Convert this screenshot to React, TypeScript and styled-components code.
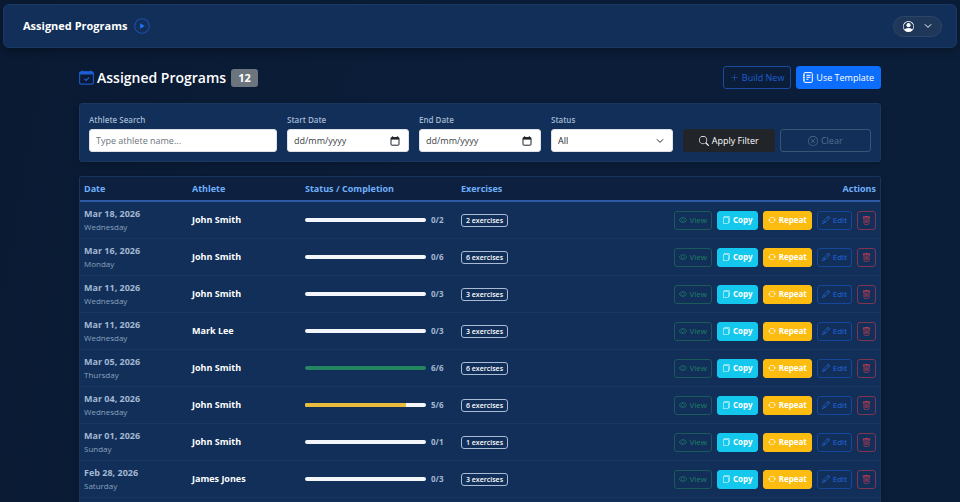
import React from "react";
import styled, { createGlobalStyle, css } from "styled-components";
import {
  BsArrowRepeat,
  BsEye,
  BsFiles,
  BsPencil,
  BsPersonCircle,
  BsPlusLg,
  BsSearch,
  BsTrash,
  BsXCircle,
} from "react-icons/bs";

const GlobalStyle = createGlobalStyle`
  *, *::before, *::after { box-sizing: border-box; }
  html { background: #0b1c36; }
  body {
    margin: 0;
    background: linear-gradient(100deg, #0a1a33 0%, #0b1d39 50%, #0b1e39 100%);
    color: #ffffff;
    font-family: "Open Sans", "Noto Sans", sans-serif;
    font-size: 9px;
    line-height: 1.5;
  }
  button, input, select { font: inherit; margin: 0; }
  svg { display: block; flex: none; }
`;

const Page = styled.div`
  display: flex;
  flex-direction: column;
  min-height: 100vh;
  padding-top: 4px;
`;

const TopBar = styled.header`
  display: flex;
  align-items: center;
  justify-content: space-between;
  margin: 0 3px;
  height: 44px;
  padding: 0 14px 0 19px;
  border: 1px solid #183a63;
  border-radius: 6px;
  background: #112f58;
  box-shadow: 0 3px 10px rgba(0, 0, 0, 0.3);
`;

const Brand = styled.div`
  display: flex;
  align-items: center;
  gap: 7px;
  font-size: 11px;
  font-weight: 700;
`;

const UserButton = styled.button`
  display: flex;
  align-items: center;
  justify-content: space-between;
  width: 49px;
  height: 21px;
  padding: 0 9px;
  border: 1px solid #2c4569;
  border-radius: 11px;
  background: #1f3759;
  color: #ffffff;
`;

const Main = styled.main`
  display: flex;
  flex: 1;
  flex-direction: column;
  padding: 18px 79px 0;
`;

const TitleRow = styled.div`
  display: flex;
  align-items: center;
  justify-content: space-between;
`;

const Title = styled.h1`
  display: flex;
  align-items: center;
  gap: 3px;
  margin: 0;
  font-size: 14px;
  font-weight: 600;
  line-height: 20px;
`;

const Count = styled.span`
  margin-left: 2px;
  padding: 0 7px;
  border-radius: 3px;
  background: #6c757d;
  font-size: 11px;
  font-weight: 700;
  line-height: 18px;
`;

const ButtonGroup = styled.div`
  display: flex;
  gap: 5px;
`;

const tones = {
  primary: css`background: #0d6efd; border-color: #0d6efd; color: #ffffff;`,
  primaryOutline: css`border-color: #1a4b9f; color: #1e5fd2;`,
  dark: css`background: #212529; border-color: #212529; color: #ffffff;`,
  muted: css`border-color: #3a5475; color: #566e8e;`,
  view: css`border-color: #1b5a58; color: #208066;`,
  copy: css`background: #14c8ed; border-color: #14c8ed; color: #ffffff; font-weight: 700;`,
  repeat: css`background: #fdbd10; border-color: #fdbd10; color: #ffffff; font-weight: 700;`,
  edit: css`border-color: #17479a; color: #2268e0;`,
  remove: css`border-color: #7f3550; color: #e03c52;`,
};

type Tone = keyof typeof tones;

const Button = styled.button<{ $tone: Tone }>`
  display: inline-flex;
  align-items: center;
  justify-content: center;
  gap: 3px;
  height: 23px;
  padding: 0 6px;
  border: 1px solid transparent;
  border-radius: 3px;
  background: transparent;
  font-size: 9px;
  font-weight: 500;
  white-space: nowrap;
  ${({ $tone }) => tones[$tone]}
`;

const RowButton = styled(Button)`
  height: 19px;
  padding: 0 4px;
  font-size: 8px;
`;

const FilterCard = styled.form`
  display: grid;
  grid-template-columns: 188fr 122fr 122fr 122fr 188fr;
  align-items: end;
  gap: 10px;
  margin-top: 14px;
  padding: 9px;
  border: 1px solid #19375f;
  border-radius: 3px;
  background: #112f58;
  box-shadow: 0 2px 6px rgba(0, 0, 0, 0.2);
`;

const Field = styled.div`
  display: flex;
  flex-direction: column;
  gap: 2px;
  min-width: 0;
`;

const Label = styled.label`
  color: #a3b7d3;
  font-size: 8px;
  font-weight: 600;
  line-height: 14px;
`;

const Control = styled.div`
  display: flex;
  align-items: center;
  height: 23px;
  padding-right: 8px;
  border: 1px solid #dee2e6;
  border-radius: 3px;
  background: #ffffff;
  color: #212529;
`;

const Input = styled.input`
  flex: 1;
  min-width: 0;
  height: 100%;
  padding: 0 6px;
  border: 0;
  outline: 0;
  background: transparent;
  color: #212529;
  font-size: 9px;
  &::placeholder { color: #6c757d; opacity: 1; }
`;

const DateInput = styled(Input)`
  &::placeholder { color: #3d4247; }
`;

const Select = styled.select`
  flex: 1;
  min-width: 0;
  height: 100%;
  padding: 0 6px;
  border: 0;
  outline: 0;
  appearance: none;
  background: transparent;
  color: #212529;
  font-size: 9px;
`;

const PickerButton = styled.button`
  padding: 0;
  border: 0;
  background: transparent;
  color: #212529;
`;

const FilterActions = styled.div`
  display: grid;
  grid-template-columns: 1fr 1fr;
  gap: 5px;
`;

const TableCard = styled.section`
  flex: 1;
  margin-top: 14px;
  border: 1px solid #19345a;
  border-bottom: 0;
  border-radius: 3px 3px 0 0;
  background: #112f58;
  box-shadow: 0 2px 6px rgba(0, 0, 0, 0.2);
`;

const Table = styled.table`
  width: 100%;
  table-layout: fixed;
  border-collapse: separate;
  border-spacing: 0;
`;

const HeadCell = styled.th<{ $width?: number; $right?: boolean }>`
  width: ${({ $width }) => ($width ? `${$width}px` : "auto")};
  height: 25px;
  padding: 0 4px;
  border-bottom: 2px solid #2c58a4;
  background: #0d2040;
  color: #6fb0fb;
  font-size: 9px;
  font-weight: 700;
  text-align: ${({ $right }) => ($right ? "right" : "left")};
`;

const Cell = styled.td`
  height: 37px;
  padding: 0 4px;
  border-bottom: 1px solid #18375f;
  vertical-align: middle;
`;

const DateText = styled.div`
  color: #a3b7d3;
  font-size: 9px;
  font-weight: 700;
  line-height: 14px;
`;

const DayText = styled.div`
  color: #8ba0bf;
  font-size: 8px;
  line-height: 12px;
`;

const Athlete = styled.span`
  font-size: 9px;
  font-weight: 700;
`;

const Progress = styled.div`
  display: flex;
  align-items: center;
  gap: 5px;
  color: #a3b7d3;
  font-size: 8px;
  font-weight: 700;
`;

const Track = styled.div`
  width: 121px;
  height: 4px;
  overflow: hidden;
  border-radius: 2px;
  background: #f3f6fa;
`;

const Fill = styled.div<{ $full: boolean }>`
  height: 100%;
  background: ${({ $full }) => ($full ? "#238561" : "#e9bc3c")};
`;

const Badge = styled.span`
  display: inline-block;
  padding: 0 4px;
  border: 1px solid #a9bbd3;
  border-radius: 3px;
  font-size: 7px;
  font-weight: 600;
  line-height: 11px;
  vertical-align: middle;
`;

const RowActions = styled.div`
  display: flex;
  justify-content: flex-end;
  gap: 5px;
`;

const PlayIcon = () => (
  <svg width="16" height="16" viewBox="0 0 16 16" aria-hidden="true">
    <circle cx="8" cy="8" r="7.3" fill="none" stroke="#1b4fa8" strokeWidth="1.1" />
    <path d="M6.2 5.3v5.4L10.6 8z" fill="#1d74f5" />
  </svg>
);

const CalendarCheckIcon = () => (
  <svg width="15" height="15" viewBox="0 0 15 15" aria-hidden="true">
    <rect x="0.6" y="1.8" width="13.8" height="12.4" rx="1.6" fill="none" stroke="#1c55c4" strokeWidth="1.2" />
    <path d="M0.6 4.6V3a1.6 1.6 0 0 1 1.6-1.6h10.6A1.6 1.6 0 0 1 14.4 3v1.6z" fill="#1c5fd8" />
    <path d="M3.3 0.4v2M11.7 0.4v2" stroke="#1c5fd8" strokeWidth="1.2" />
    <path d="M5.3 8.8l1.8 1.7 3-3.2" fill="none" stroke="#2263d6" strokeWidth="1.1" />
  </svg>
);

const TemplateIcon = () => (
  <svg width="10" height="11" viewBox="0 0 10 11" fill="none" stroke="currentColor" aria-hidden="true">
    <rect x="1" y="0.6" width="8.3" height="9.8" rx="1" />
    <path d="M0 3h1.6M0 5.5h1.6M0 8h1.6M3.4 3.3h4M3.4 5.3h4M3.4 7.3h2" />
  </svg>
);

const DatePickerIcon = () => (
  <svg width="10" height="10" viewBox="0 0 10 10" aria-hidden="true">
    <rect x="1" y="1.6" width="8" height="7.6" rx="0.6" fill="none" stroke="currentColor" strokeWidth="1" />
    <path d="M1 1.4h8v2.2H1z" fill="currentColor" />
    <path d="M2.7 0.2v2M7.3 0.2v2" stroke="currentColor" strokeWidth="1" />
  </svg>
);

const ArrowDown = () => (
  <svg width="8" height="8" viewBox="0 0 8 8" aria-hidden="true">
    <path d="M1.2 2.6L4 5.4l2.8-2.8" fill="none" stroke="currentColor" strokeWidth="1" strokeLinecap="round" strokeLinejoin="round" />
  </svg>
);

interface Program {
  date: string;
  day: string;
  athlete: string;
  done: number;
  total: number;
  exercises: number;
}

const programs: Program[] = [
  { date: "Mar 18, 2026", day: "Wednesday", athlete: "John Smith", done: 0, total: 2, exercises: 2 },
  { date: "Mar 16, 2026", day: "Monday", athlete: "John Smith", done: 0, total: 6, exercises: 6 },
  { date: "Mar 11, 2026", day: "Wednesday", athlete: "John Smith", done: 0, total: 3, exercises: 3 },
  { date: "Mar 11, 2026", day: "Wednesday", athlete: "Mark Lee", done: 0, total: 3, exercises: 3 },
  { date: "Mar 05, 2026", day: "Thursday", athlete: "John Smith", done: 6, total: 6, exercises: 6 },
  { date: "Mar 04, 2026", day: "Wednesday", athlete: "John Smith", done: 5, total: 6, exercises: 6 },
  { date: "Mar 01, 2026", day: "Sunday", athlete: "John Smith", done: 0, total: 1, exercises: 1 },
  { date: "Feb 28, 2026", day: "Saturday", athlete: "James Jones", done: 0, total: 3, exercises: 3 },
];

function DateField({ id, label }: { id: string; label: string }) {
  return (
    <Field>
      <Label htmlFor={id}>{label}</Label>
      <Control>
        <DateInput id={id} type="text" placeholder="dd/mm/yyyy" />
        <PickerButton type="button" aria-label={`Pick ${label.toLowerCase()}`}>
          <DatePickerIcon />
        </PickerButton>
      </Control>
    </Field>
  );
}

function ProgramRow({ program }: { program: Program }) {
  const { date, day, athlete, done, total, exercises } = program;
  return (
    <tr>
      <Cell>
        <DateText>{date}</DateText>
        <DayText>{day}</DayText>
      </Cell>
      <Cell>
        <Athlete>{athlete}</Athlete>
      </Cell>
      <Cell>
        <Progress>
          <Track>
            <Fill $full={done === total} style={{ width: `${(done / total) * 100}%` }} />
          </Track>
          <span>{done}/{total}</span>
        </Progress>
      </Cell>
      <Cell>
        <Badge>{exercises} exercises</Badge>
      </Cell>
      <Cell>
        <RowActions>
          <RowButton type="button" $tone="view"><BsEye size={8} />View</RowButton>
          <RowButton type="button" $tone="copy"><BsFiles size={8} />Copy</RowButton>
          <RowButton type="button" $tone="repeat"><BsArrowRepeat size={8} />Repeat</RowButton>
          <RowButton type="button" $tone="edit"><BsPencil size={8} />Edit</RowButton>
          <RowButton type="button" $tone="remove" aria-label="Delete"><BsTrash size={9} /></RowButton>
        </RowActions>
      </Cell>
    </tr>
  );
}

export default function App() {
  return (
    <>
      <GlobalStyle />
      <Page>
        <TopBar>
          <Brand>
            Assigned Programs
            <PlayIcon />
          </Brand>
          <UserButton type="button" aria-label="Account menu">
            <BsPersonCircle size={11} />
            <ArrowDown />
          </UserButton>
        </TopBar>
        <Main>
          <TitleRow>
            <Title>
              <CalendarCheckIcon />
              Assigned Programs
              <Count>12</Count>
            </Title>
            <ButtonGroup>
              <Button type="button" $tone="primaryOutline"><BsPlusLg size={9} />Build New</Button>
              <Button type="button" $tone="primary"><TemplateIcon />Use Template</Button>
            </ButtonGroup>
          </TitleRow>
          <FilterCard onSubmit={(e) => e.preventDefault()}>
            <Field>
              <Label htmlFor="athlete">Athlete Search</Label>
              <Control>
                <Input id="athlete" type="text" placeholder="Type athlete name..." />
              </Control>
            </Field>
            <DateField id="start" label="Start Date" />
            <DateField id="end" label="End Date" />
            <Field>
              <Label htmlFor="status">Status</Label>
              <Control>
                <Select id="status" defaultValue="all">
                  <option value="all">All</option>
                </Select>
                <ArrowDown />
              </Control>
            </Field>
            <FilterActions>
              <Button type="submit" $tone="dark"><BsSearch size={10} />Apply Filter</Button>
              <Button type="reset" $tone="muted"><BsXCircle size={10} />Clear</Button>
            </FilterActions>
          </FilterCard>
          <TableCard>
            <Table>
              <thead>
                <tr>
                  <HeadCell $width={108}>Date</HeadCell>
                  <HeadCell $width={113}>Athlete</HeadCell>
                  <HeadCell $width={156}>Status / Completion</HeadCell>
                  <HeadCell $width={100}>Exercises</HeadCell>
                  <HeadCell $right>Actions</HeadCell>
                </tr>
              </thead>
              <tbody>
                {programs.map((program, i) => (
                  <ProgramRow key={i} program={program} />
                ))}
              </tbody>
            </Table>
          </TableCard>
        </Main>
      </Page>
    </>
  );
}
